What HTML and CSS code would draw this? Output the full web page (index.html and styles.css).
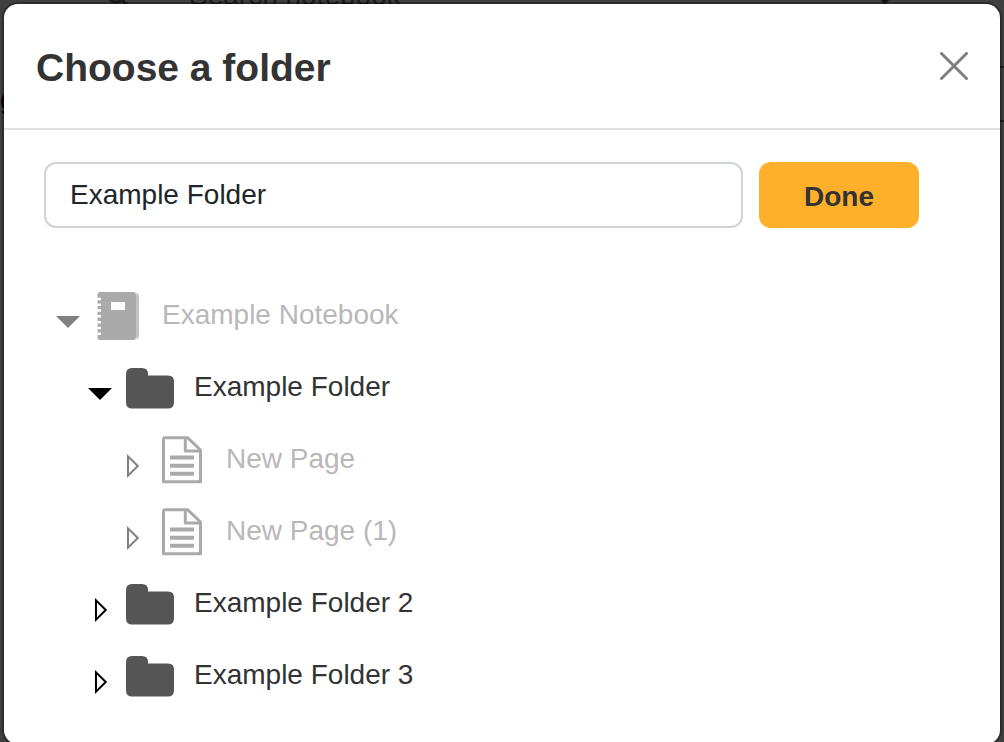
FILE: index.html
```html
<!DOCTYPE html>
<html lang="en">
<head>
    <meta charset="UTF-8" />
    <meta name="viewport" content="width=device-width, initial-scale=1.0" />
    <title>Choose a folder</title>
    <link rel="stylesheet" href="styles.css">
</head>
<body>

<!-- Shared icons -->
<svg class="icon-defs" aria-hidden="true">
    <symbol id="icon-open" viewBox="0 0 24 24">
        <path d="M0 6h24L12 18z" fill="currentColor" />
    </symbol>
    <symbol id="icon-closed" viewBox="0 0 24 24">
        <path d="M8 2.400v19.200L17.800 12z" fill="none" stroke="currentColor" stroke-width="2" stroke-miterlimit="10" />
    </symbol>
    <symbol id="icon-folder" viewBox="0 0 48 48">
        <path d="M6 4h10q6 0 6 6v1.500h20q6 0 6 6V38.500q0 6-6 6H6q-6 0-6-6V10q0-6 6-6z" fill="currentColor" />
    </symbol>
    <symbol id="icon-notebook" viewBox="0 0 48 48">
        <path fill="currentColor" fill-rule="evenodd" d="M6.500 0H40.500Q43 0.500 43 3V45Q43 47.500 40.500 48H6.500Q3.500 48 3.500 45.500V43H7V40.500H3.500V37.200H7V34.700H3.500V31.400H7V28.900H3.500V25.600H7V23.100H3.500V19.800H7V17.300H3.500V14H7V11.500H3.500V8.200H7V5.700H3.500V2.500Q3.500 0 6.500 0zM17 10v8h14v-8z" />
        <path fill="currentColor" d="M42.500 1q2.200.7 2.200 3v40q0 2.300-2.200 3z" />
        <path d="M40.500 0.500q2.500 1 2.500 4v39q0 3-2.500 4" fill="none" stroke="#fff" stroke-width=".6" />
    </symbol>
    <symbol id="icon-page" viewBox="0 0 48 48">
        <g fill="none" stroke="currentColor" stroke-width="3" stroke-linejoin="round" stroke-linecap="round">
            <path d="M7 1.700h22.500L42.500 14v31.700H5.500V3.200Q5.500 1.700 7 1.700z" />
            <path d="M27.300 2v13h15" />
        </g>
        <path d="M12 21.500h24M12 29.800h24M12 37.800h24" stroke="currentColor" stroke-width="4" />
    </symbol>
</svg>

<!-- Page behind the dialog -->
<div class="backdrop" aria-hidden="true">
    <svg class="backdrop-search" viewBox="0 0 24 24"><circle cx="10" cy="10" r="8" /><path d="M16 16l5 5" /></svg>
    <span class="backdrop-text">Search notebook</span>
    <svg class="backdrop-caret" viewBox="0 0 16 8"><path d="M0 0h16L8 8z" /></svg>
    <span class="backdrop-letter">g</span>
    <span class="backdrop-box"></span>
</div>

<div class="modal" role="dialog" aria-labelledby="modal-title">
    <div class="modal-header">
        <h1 id="modal-title">Choose a folder</h1>
        <button class="close-btn" type="button" aria-label="Close">
            <svg viewBox="0 0 28 28"><path d="M1.500 1.500l25 25M26.500 1.500l-25 25" /></svg>
        </button>
    </div>

    <div class="modal-body">
        <!-- Selected folder -->
        <form class="folder-form">
            <input class="folder-input" type="text" value="Example Folder" aria-label="Folder name">
            <button class="done-btn" type="button">Done</button>
        </form>

        <!-- Folder tree -->
        <ul class="tree">
            <li>
                <div class="row muted">
                    <button class="toggle" type="button" aria-label="Collapse Example Notebook"><svg><use href="#icon-open" /></svg></button>
                    <svg class="icon"><use href="#icon-notebook" /></svg>
                    <button class="name" type="button" disabled>Example Notebook</button>
                </div>
                <ul>
                    <li>
                        <div class="row">
                            <button class="toggle" type="button" aria-label="Collapse Example Folder"><svg><use href="#icon-open" /></svg></button>
                            <svg class="icon"><use href="#icon-folder" /></svg>
                            <button class="name" type="button">Example Folder</button>
                        </div>
                        <ul>
                            <li class="row muted">
                                <button class="toggle" type="button" aria-label="Expand New Page"><svg><use href="#icon-closed" /></svg></button>
                                <svg class="icon"><use href="#icon-page" /></svg>
                                <button class="name" type="button" disabled>New Page</button>
                            </li>
                            <li class="row muted">
                                <button class="toggle" type="button" aria-label="Expand New Page (1)"><svg><use href="#icon-closed" /></svg></button>
                                <svg class="icon"><use href="#icon-page" /></svg>
                                <button class="name" type="button" disabled>New Page (1)</button>
                            </li>
                        </ul>
                    </li>
                    <li class="row">
                        <button class="toggle" type="button" aria-label="Expand Example Folder 2"><svg><use href="#icon-closed" /></svg></button>
                        <svg class="icon"><use href="#icon-folder" /></svg>
                        <button class="name" type="button">Example Folder 2</button>
                    </li>
                    <li class="row">
                        <button class="toggle" type="button" aria-label="Expand Example Folder 3"><svg><use href="#icon-closed" /></svg></button>
                        <svg class="icon"><use href="#icon-folder" /></svg>
                        <button class="name" type="button">Example Folder 3</button>
                    </li>
                </ul>
            </li>
        </ul>
    </div>
</div>

</body>
</html>
```
FILE: styles.css
```css
* {
    box-sizing: border-box;
}
html {
    overflow: hidden;
}
body {
    margin: 0;
    padding: 4px;
    background-color: #3f3f3f;
    color: #333;
    font-family: "Liberation Sans", Arial, sans-serif;
    font-size: 28px;
    line-height: 32px;
}
button, input {
    font: inherit;
    color: inherit;
}
button {
    padding: 0;
    border: none;
    background: none;
    cursor: pointer;
}
ul {
    list-style: none;
    margin: 0;
    padding: 0;
}
.icon-defs {
    position: absolute;
    width: 0;
    height: 0;
}

/* Page behind the dialog */
.backdrop {
    position: absolute;
    inset: 0;
    overflow: hidden;
    color: #1a1a1a;
}
.backdrop > * {
    position: absolute;
}
.backdrop-search {
    top: -16px;
    left: 106px;
    width: 24px;
    fill: none;
    stroke: #1a1a1a;
    stroke-width: 3;
}
.backdrop-text {
    top: -20px;
    left: 189px;
}
.backdrop-caret {
    top: -4px;
    right: 111px;
    width: 16px;
    fill: #111;
}
.backdrop-letter {
    top: 84px;
    left: 0;
    color: #000;
}
.backdrop-box {
    top: 66px;
    right: 0;
    width: 20px;
    height: 56px;
    border: 2px solid #1a1a1a;
    border-width: 2px 0;
}

/* Dialog */
.modal {
    position: relative;
    background-color: #fff;
    border-radius: 14px;
    box-shadow: 0 0 0 2px rgba(0, 0, 0, 0.3);
}
.modal-header {
    display: flex;
    align-items: center;
    justify-content: space-between;
    padding: 40px 32px;
    border-bottom: 2px solid #dee2e6;
}
h1 {
    margin: 0;
    padding-top: 4px;
    font-size: 39px;
    font-weight: bold;
    line-height: 40px;
}
.close-btn {
    width: 28px;
    height: 28px;
}
.close-btn svg {
    display: block;
    fill: none;
    stroke: #7f7f7f;
    stroke-width: 3;
    stroke-linecap: round;
}
.modal-body {
    padding: 32px 40px;
}
.folder-form {
    display: flex;
    gap: 16px;
    padding-right: 41px;
}
.folder-input {
    flex: 1;
    min-width: 0;
    height: 66px;
    padding: 0 24px;
    border: 2px solid #ced4da;
    border-radius: 12px;
    background-color: #fff;
    color: #212529;
}
.folder-input:focus {
    border-color: #ffb02a;
    outline: none;
}
.done-btn {
    width: 160px;
    padding-top: 4px;
    border-radius: 12px;
    background-color: #ffb02a;
    font-weight: bold;
}

/* Folder tree */
.tree {
    margin-top: 52px;
    padding-left: 12px;
}
.tree ul {
    padding-left: 32px;
}
.row {
    display: flex;
    align-items: center;
    height: 72px;
}
.toggle {
    margin-right: 14px;
    padding-top: 12px;
    color: #000;
}
.toggle svg {
    display: block;
    width: 24px;
    height: 24px;
}
.icon {
    width: 48px;
    height: 48px;
    margin-right: 20px;
    color: #555;
}
.name {
    padding-bottom: 2px;
}
.muted .toggle {
    color: #808080;
}
.muted .icon {
    color: #aaa;
}
.muted .name {
    color: #b8b8b8;
    cursor: default;
}
```
